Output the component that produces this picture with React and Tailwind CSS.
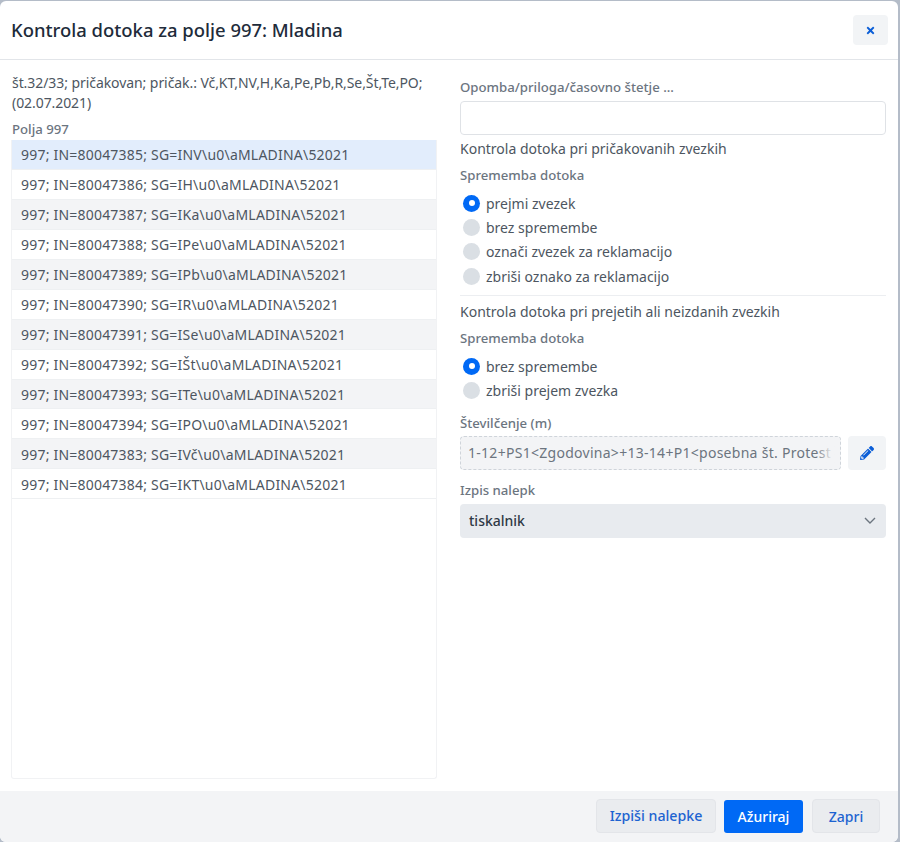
import React from "react";
import { FaPencilAlt, FaTimes } from "react-icons/fa";
const rows = ["INV","IH","IKa","IPe","IPb","IR","ISe","IŠt","ITe","IPO","IVč","IKT"];
const ins = [85,86,87,88,89,90,91,92,93,94,83,84];
function Radio({ on, children }) {
  return (
    <div className="flex items-center h-[24.3px]">
      {on ? (
        <span className="ml-[3px] w-[17px] h-[17px] rounded-full bg-[#0069f5] flex items-center justify-center"><span className="w-[6px] h-[6px] rounded-full bg-white" /></span>
      ) : (
        <span className="ml-[3px] w-[17px] h-[17px] rounded-full bg-[#dadfe4]" />
      )}
      <span className="ml-[6px] text-[#4d5661] relative top-[0.5px]">{children}</span>
    </div>
  );
}
const Label = ({ children, className = "" }) => <div className={"text-[13.2px] font-medium text-[#6c757f] leading-[20px] " + className}>{children}</div>;
export default function App() {
  return (
    <div className="w-[900px] h-[842px] bg-[#b4bcc8] pt-[1px] overflow-hidden" style={{ fontFamily: "'Noto Sans', sans-serif" }}>
      <div className="w-[898px] h-[841px] bg-white rounded-[6px] flex flex-col overflow-hidden text-[14px]">
        <div className="h-[59px] shrink-0 border-b border-[#e2e5e9] flex items-center justify-between pl-[11px] pr-[10px]">
          <div className="text-[18.45px] font-medium text-[#212b3a]">Kontrola dotoka za polje 997: Mladina</div>
          <button className="w-[35px] h-[30px] rounded-[4px] bg-[#f2f4f6] flex items-center justify-center text-[#0b5ed7]">
            <FaTimes size={11} />
          </button>
        </div>
        <div className="flex-1 flex min-h-0 pl-[11px] pr-[12px] gap-[23px]">
          <div className="w-[426px] shrink-0 flex flex-col pt-[13px] pb-[12px]">
            <div className="text-[#4d5661] leading-[20px] text-[14px] pl-[1px] tracking-[-0.07px]">št.32/33; pričakovan; pričak.: Vč,KT,NV,H,Ka,Pe,Pb,R,Se,Št,Te,PO; (02.07.2021)</div>
            <Label className="mt-[6px] pl-[1px]">Polja 997</Label>
            <div className="flex-1 mt-[1px] border border-[#f1f2f4] border-t-0 rounded-b-[3px]">
              {rows.map((r, i) => (
                <div key={r} className={"h-[29.95px] flex items-center pl-[9px] pt-[1px] border-b border-[#eef0f2] text-[#4d5661] tracking-[0.21px] " + (i === 0 ? "bg-[#e2edfc]" : i % 2 === 0 ? "bg-[#f3f4f6]" : "bg-white")}>
                  {"997; IN=800473" + ins[i] + "; SG=" + r + "\\u0\\aMLADINA\\52021"}
                </div>
              ))}
            </div>
          </div>
          <div className="w-[426px] shrink-0 pt-[17px]">
            <Label>Opomba/priloga/časovno štetje ...</Label>
            <div className="mt-[4px] h-[34px] border border-[#dfe2e6] rounded-[4px] bg-white" />
            <div className="mt-[4px] text-[#4d5661] leading-[20px]">Kontrola dotoka pri pričakovanih zvezkih</div>
            <Label className="mt-[6px]">Sprememba dotoka</Label>
            <div className="mt-[6px] leading-[20px]">
              <Radio on>prejmi zvezek</Radio>
              <Radio>brez spremembe</Radio>
              <Radio>označi zvezek za reklamacijo</Radio>
              <Radio>zbriši oznako za reklamacijo</Radio>
            </div>
            <div className="mt-[7px] border-t border-[#eceef1]" />
            <div className="mt-[6px] text-[#4d5661] leading-[20px]">Kontrola dotoka pri prejetih ali neizdanih zvezkih</div>
            <Label className="mt-[6px]">Sprememba dotoka</Label>
            <div className="mt-[6px] leading-[20px]">
              <Radio on>brez spremembe</Radio>
              <Radio>zbriši prejem zvezka</Radio>
            </div>
            <Label className="mt-[10px]">Številčenje (m)</Label>
            <div className="mt-[3px] flex gap-[7px]">
              <div className="relative flex-1 min-w-0 h-[34px] border border-dashed border-[#cfd4da] rounded-[4px] bg-[#f3f4f6] flex items-center pl-[7px] overflow-hidden">
                <span className="text-[#6c757f] whitespace-nowrap tracking-[0.28px]">1-12+PS1&lt;Zgodovina&gt;+13-14+P1&lt;posebna št. Protest</span>
                <span className="absolute right-0 top-0 bottom-0 w-[24px] bg-linear-to-l from-[#f3f4f6] from-30% to-transparent" />
              </div>
              <button className="w-[38px] h-[34px] shrink-0 rounded-[4px] bg-[#f2f4f6] flex items-center justify-center text-[#0b5ed7]">
                <FaPencilAlt size={14} />
              </button>
            </div>
            <Label className="mt-[10px]">Izpis nalepk</Label>
            <div className="mt-[4px] h-[34px] rounded-[4px] bg-[#e8ebef] flex items-center justify-between pl-[9px] pr-[10px]">
              <span className="font-medium text-[#2f3945]">tiskalnik</span>
              <svg width="12" height="7" viewBox="0 0 12 7" fill="none"><path d="M1 1l5 5 5-5" stroke="#6c757f" strokeWidth="1.4" /></svg>
            </div>
          </div>
        </div>
        <div className="h-[51px] shrink-0 bg-[#f3f4f6] flex items-center justify-end pr-[18px] gap-[8px] pb-[1px] font-medium">
          <button className="h-[34px] w-[120px] rounded-[4px] bg-[#eaecef] border border-[#e3e5e9] text-[#1d63d1] text-[14.2px]">Izpiši nalepke</button>
          <button className="h-[33px] w-[79px] rounded-[3px] bg-[#0069f5] text-white">Ažuriraj</button>
          <button className="h-[34px] w-[68px] ml-[1px] rounded-[4px] bg-[#eaecef] border border-[#e3e5e9] text-[#1d63d1]">Zapri</button>
        </div>
      </div>
    </div>
  );
}
